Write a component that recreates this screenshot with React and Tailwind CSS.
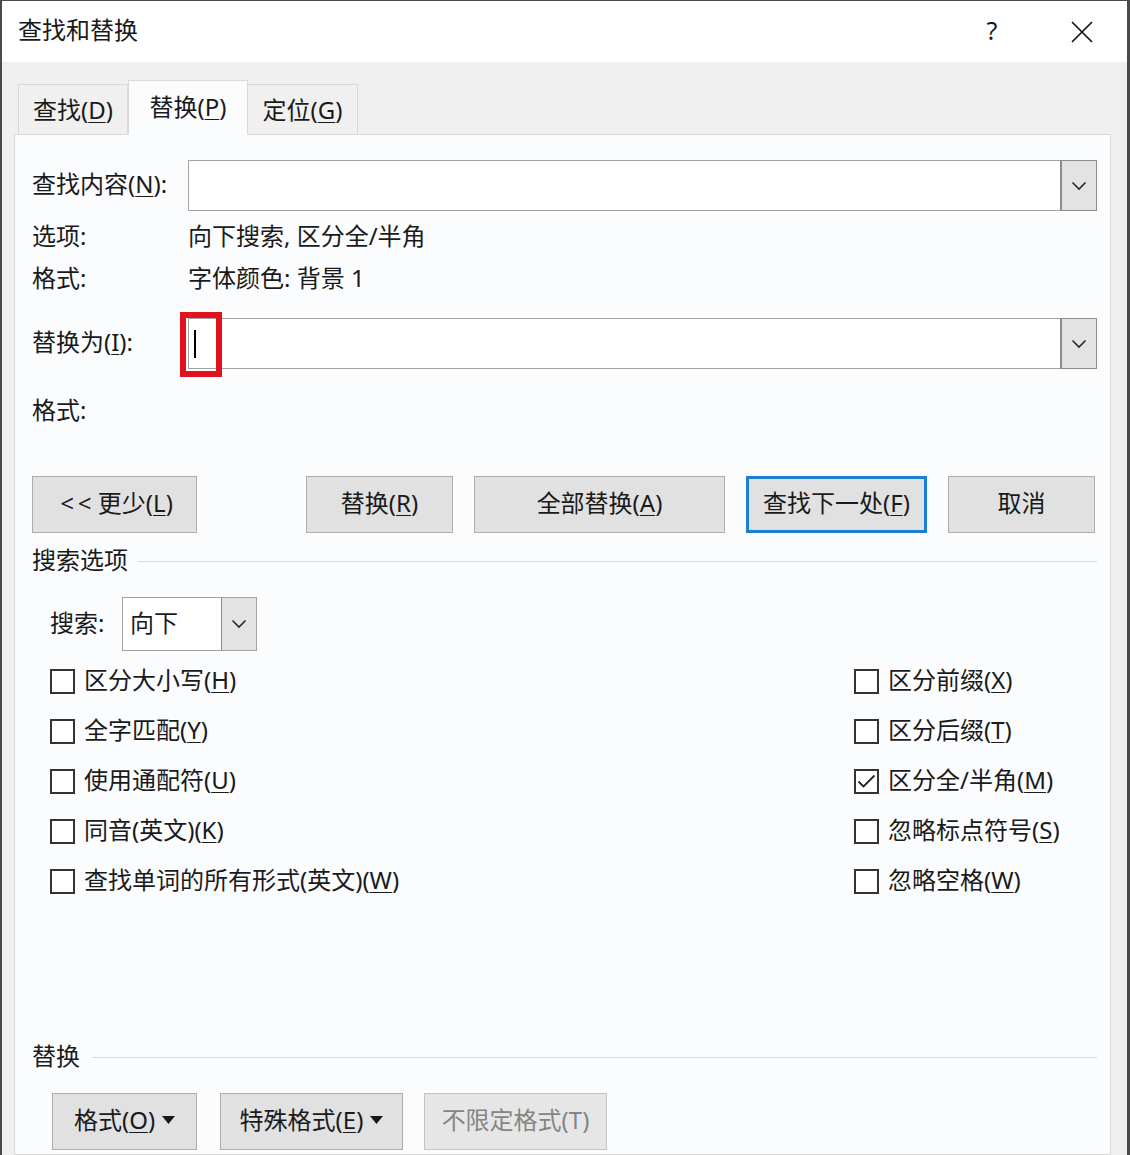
import { useState } from 'react'

// Small access-key helper: "查找(D)" -> 查找(<u>D</u>)
function Key({ children }) {
  return <span className="underline underline-offset-[3px] decoration-1">{children}</span>
}

function Chevron() {
  return (
    <svg width="16" height="10" viewBox="0 0 16 10" fill="none">
      <path d="M1.5 1.5 L8 8 L14.5 1.5" stroke="#2a2a2a" strokeWidth="1.6" />
    </svg>
  )
}

function Caret() {
  return (
    <svg width="13" height="8" viewBox="0 0 13 8" className="ml-[7px]">
      <polygon points="0,0 13,0 6.5,8" fill="#1a1a1a" />
    </svg>
  )
}

// Combo box used for 查找内容 / 替换为
function ComboBox({ children }) {
  return (
    <div className="flex-1 flex h-full border border-[#a3a3a3] bg-white">
      <div className="flex-1 flex items-center pl-[6px]">{children}</div>
      <div className="w-[35px] flex items-center justify-center bg-[#e3e3e3] border-l border-[#8c8c8c] outline outline-1 outline-[#8c8c8c]">
        <Chevron />
      </div>
    </div>
  )
}

function Button({ children, width, primary, disabled }) {
  let cls = 'h-full flex items-center justify-center pb-[3px] bg-[#e1e1e1] '
  if (primary) cls += 'border-[3px] border-[#1c7fd6] '
  else if (disabled) cls += 'border border-[#c4c4c4] bg-[#e6e6e6] text-[#858585] '
  else cls += 'border border-[#adadad] '
  return (
    <div className={cls} style={{ width }}>
      {children}
    </div>
  )
}

function Section({ label, lineGap }) {
  return (
    <div className="flex items-center h-[30px]">
      <span className="pb-[3px]">{label}</span>
      <div className={'flex-1 h-px bg-[#dadada] ' + lineGap} />
    </div>
  )
}

function CheckRow({ label, k, tail, checked }) {
  return (
    <div className="flex items-center h-[50px]">
      <div className="w-[25px] h-[25px] border-2 border-[#333] bg-white flex items-center justify-center mr-[9px]">
        {checked && (
          <svg width="19" height="15" viewBox="0 0 19 15" fill="none">
            <path d="M1.5 7.5 L6.5 12.5 L17.5 1.5" stroke="#222" strokeWidth="1.8" />
          </svg>
        )}
      </div>
      <span className="pb-[2px]">
        {label}(<Key>{k}</Key>){tail}
      </span>
    </div>
  )
}

export default function App() {
  const [tab] = useState(1)

  const leftChecks = [
    ['区分大小写', 'H'],
    ['全字匹配', 'Y'],
    ['使用通配符', 'U'],
    ['同音(英文)', 'K'],
    ['查找单词的所有形式(英文)', 'W'],
  ]
  const rightChecks = [
    ['区分前缀', 'X'],
    ['区分后缀', 'T'],
    ['区分全/半角', 'M', true],
    ['忽略标点符号', 'S'],
    ['忽略空格', 'W'],
  ]

  return (
    <div className="w-[1130px] h-[1155px] overflow-hidden flex flex-col bg-[#f0f0f0] border-l-2 border-r-[3px] border-t border-[#4a4a4a] text-[24px] text-[#1a1a1a] font-['Noto_Sans','Noto_Sans_CJK_SC',sans-serif] leading-none">
      {/* title bar */}
      <div className="h-[61px] shrink-0 bg-white flex items-center pl-[16px]">
        <span className="pb-[3px]">查找和替换</span>
        <div className="ml-auto flex h-full">
          <div className="w-[90px] flex items-center justify-center text-[25px] pb-[3px]">?</div>
          <div className="w-[90px] flex items-center justify-center">
            <svg width="22" height="22" viewBox="0 0 22 22">
              <path d="M1 1 L21 21 M21 1 L1 21" stroke="#111" strokeWidth="1.7" />
            </svg>
          </div>
        </div>
      </div>

      {/* tabs */}
      <div className="h-[72px] shrink-0 flex items-end pl-[16px]">
        <div className="w-[110px] h-[50px] flex items-center justify-center border border-b-0 border-[#d9d9d9] bg-[#f0f0f0]">
          <span>查找(<Key>D</Key>)</span>
        </div>
        <div className={'w-[120px] h-[55px] flex items-center justify-center border border-b-0 border-[#d9d9d9] relative z-10 mb-[-1px] pb-[3px] ' + (tab === 1 ? 'bg-[#fbfcfd]' : '')}>
          <span>替换(<Key>P</Key>)</span>
        </div>
        <div className="w-[110px] h-[50px] flex items-center justify-center border border-b-0 border-l-0 border-[#d9d9d9] bg-[#f0f0f0]">
          <span>定位(<Key>G</Key>)</span>
        </div>
      </div>

      {/* tab panel */}
      <div className="ml-[12px] w-[1097px] flex-1 border border-[#d9d9d9] bg-[#fbfcfd] pl-[17px] pr-[13px] flex flex-col">
        <div className="mt-[25px] h-[51px] flex items-center">
          <div className="w-[156px] pb-[3px]">
            查找内容(<Key>N</Key>):
          </div>
          <ComboBox />
        </div>

        <div className="mt-[5px] h-[42px] flex items-center pb-[3px]">
          <div className="w-[156px]">选项:</div>
          <div>向下搜索, 区分全/半角</div>
        </div>
        <div className="h-[42px] flex items-center pb-[3px]">
          <div className="w-[156px]">格式:</div>
          <div>字体颜色: 背景 1</div>
        </div>

        <div className="mt-[18px] h-[51px] flex items-center relative">
          <div className="w-[156px] pb-[3px]">
            替换为(<Key>I</Key>):
          </div>
          <ComboBox>
            <div className="w-[2px] h-[28px] bg-black ml-[-1px]" />
          </ComboBox>
          {/* red highlight around the caret */}
          <div className="absolute left-[148px] top-[-6px] w-[42px] h-[65px] border-[6px] border-[#e3101e]" />
        </div>

        <div className="mt-[21px] h-[42px] flex items-center pb-[3px]">
          <div className="w-[156px]">格式:</div>
        </div>

        <div className="mt-[44px] h-[57px] flex gap-[21px]">
          <div className="mr-[88px] h-full">
            <Button width={165}>
              <span className="pl-[4px]">&lt;&thinsp;&lt; 更少(<Key>L</Key>)</span>
            </Button>
          </div>
          <Button width={147}>
            替换(<Key>R</Key>)
          </Button>
          <Button width={251}>
            全部替换(<Key>A</Key>)
          </Button>
          <Button width={181} primary>
            查找下一处(<Key>F</Key>)
          </Button>
          <Button width={147}>取消</Button>
        </div>

        <div className="mt-[13px]">
          <Section label="搜索选项" lineGap="ml-[10px]" />
        </div>

        <div className="mt-[21px] h-[54px] flex items-center pl-[18px]">
          <div className="w-[72px] pb-[3px]">搜索:</div>
          <div className="w-[135px] h-full flex border border-[#a3a3a3] bg-white">
            <div className="flex-1 flex items-center pl-[7px] pb-[3px]">向下</div>
            <div className="w-[35px] flex items-center justify-center bg-[#e3e3e3] border-l border-[#8c8c8c]">
              <Chevron />
            </div>
          </div>
        </div>

        <div className="mt-[5px] pl-[18px] grid grid-cols-[804px_1fr]">
          <div className="flex flex-col">
            {leftChecks.map(([l, k]) => (
              <CheckRow key={l} label={l} k={k} />
            ))}
          </div>
          <div className="flex flex-col">
            {rightChecks.map(([l, k, c]) => (
              <CheckRow key={l} label={l} k={k} checked={c} />
            ))}
          </div>
        </div>

        <div className="mt-[136px]">
          <Section label="替换" lineGap="ml-[12px]" />
        </div>

        <div className="mt-[21px] h-[57px] shrink-0 flex pl-[20px]">
          <Button width={145}>
            格式(<Key>O</Key>)
            <Caret />
          </Button>
          <div className="w-[23px]" />
          <Button width={183}>
            特殊格式(<Key>E</Key>)
            <Caret />
          </Button>
          <div className="w-[21px]" />
          <Button width={183} disabled>
            不限定格式(T)
          </Button>
        </div>
      </div>
    </div>
  )
}
